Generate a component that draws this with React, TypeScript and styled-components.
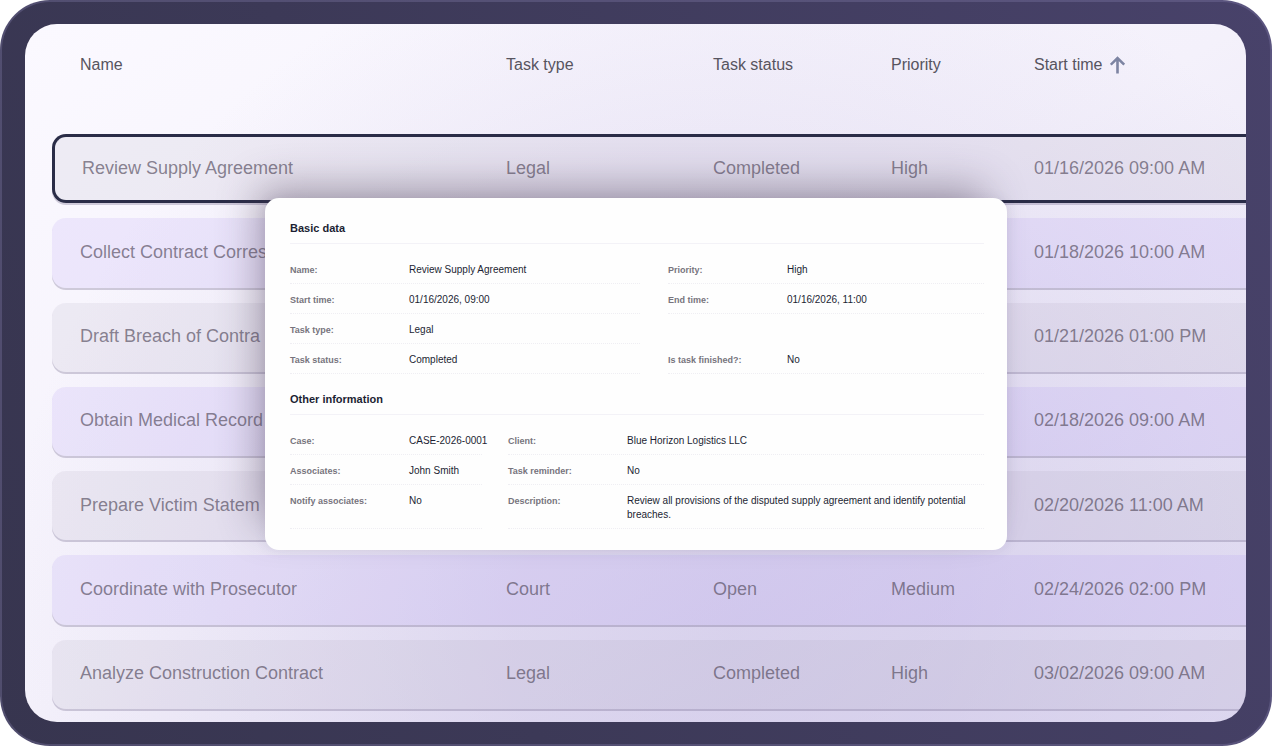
import React from "react";
import styled, { createGlobalStyle, css } from "styled-components";

const GlobalStyle = createGlobalStyle`
  *, *::before, *::after { box-sizing: border-box; }
  body {
    margin: 0;
    background: #ffffff;
    font-family: "Liberation Sans", Arial, Helvetica, sans-serif;
  }
`;

const Frame = styled.main`
  position: relative;
  display: flex;
  min-height: 100vh;
  padding: 22px 24px 22px 23px;
  border: 2px solid rgba(135, 128, 175, 0.32);
  border-radius: 50px;
  background: linear-gradient(70deg, #37354f 0%, #3c3957 35%, #48426a 100%) border-box;
`;

const Panel = styled.section`
  flex: 1;
  min-width: 0;
  display: flex;
  padding: 0 0 11px 27px;
  overflow: hidden;
  border-radius: 32px;
  background:
    radial-gradient(ellipse 60% 105% at 58% 88%, rgba(190, 180, 222, 0.42) 0%, rgba(190, 180, 222, 0.36) 30%, rgba(190, 180, 222, 0) 100%),
    linear-gradient(to bottom right, #fbf9ff 0%, #f4f1fb 50%, #e1dcf2 100%);
`;

const TaskTable = styled.table`
  flex: 1;
  min-width: 0;
  display: flex;
  flex-direction: column;
`;

const TableHead = styled.thead`
  display: block;
  margin-bottom: 29px;
`;

const TableBody = styled.tbody`
  flex: 1;
  display: grid;
  grid-auto-rows: 1fr;
  gap: 15px;
  padding-bottom: 2px;
`;

const columns = css`
  display: grid;
  grid-template-columns: 426fr 207fr 178fr 143fr 212fr;
  align-items: center;
  padding-left: 28px;
`;

const HeadRow = styled.tr`
  ${columns}
  height: 81px;
`;

const HeadCell = styled.th`
  padding: 0;
  font-size: 16px;
  line-height: 20px;
  font-weight: 400;
  text-align: left;
  white-space: nowrap;
  color: #57545f;
`;

const SortButton = styled.button`
  display: flex;
  align-items: center;
  gap: 8px;
  padding: 0;
  border: 0;
  background: none;
  font: inherit;
  color: inherit;
  cursor: pointer;
`;

const Cell = styled.td`
  padding: 0;
  font-size: 18px;
  line-height: 24px;
  white-space: nowrap;
  color: rgba(84, 76, 94, 0.68);
`;

const TaskRow = styled.tr<{ $tinted: boolean; $selected: boolean }>`
  ${columns}
  min-height: 56px;
  padding-bottom: 2px;
  border-radius: 14px 0 0 14px;
  background: ${(p) => (p.$tinted ? "rgba(170, 140, 240, 0.15)" : "rgba(160, 150, 170, 0.12)")};
  box-shadow: 0 2px 0 rgba(110, 100, 135, 0.3);
  ${(p) =>
    p.$selected &&
    css`
      padding-left: 25px;
      border: solid #2a2c47;
      border-width: 3px 0 3px 3px;
      ${Cell}:first-child {
        padding-left: 2px;
      }
    `}
`;

const Overlay = styled.div`
  position: absolute;
  inset: 0;
  display: flex;
  align-items: center;
  justify-content: center;
  padding-top: 2px;
`;

const Card = styled.article`
  width: 742px;
  max-width: 90%;
  padding: 22px 23px 21px 25px;
  border-radius: 14px;
  background: #fefefe;
  box-shadow:
    -14px -18px 40px -8px rgba(70, 56, 76, 0.42),
    0 0 12px rgba(90, 80, 130, 0.1);
`;

const CardSection = styled.section`
  & + & {
    margin-top: 17px;
  }
`;

const SectionTitle = styled.h2`
  margin: 0 0 10px;
  padding-bottom: 7px;
  border-bottom: 1px solid #f3f2f7;
  font-size: 11px;
  line-height: 16px;
  font-weight: 700;
  color: #1c1f33;
`;

const Fields = styled.dl<{ $split: string; $gap: number }>`
  display: grid;
  grid-template-columns: ${(p) => p.$split};
  column-gap: ${(p) => p.$gap}px;
  margin: 0;
`;

const Field = styled.div<{ $newRow?: boolean }>`
  display: grid;
  grid-template-columns: 119px minmax(0, 1fr);
  ${(p) => p.$newRow && "grid-column-start: 1;"}
  padding: 9px 0 6px;
  border-bottom: 1px dotted #efeef3;
  font-size: 10px;
  line-height: 14px;
`;

const Term = styled.dt`
  font-size: 9px;
  font-weight: 700;
  color: #77747d;
`;

const Value = styled.dd<{ $wrap?: boolean }>`
  margin: 0;
  white-space: ${(p) => (p.$wrap ? "normal" : "nowrap")};
  color: #1c1f33;
`;

const tasks = [
  ["Review Supply Agreement", "Legal", "Completed", "High", "01/16/2026 09:00 AM"],
  ["Collect Contract Corres", "", "", "", "01/18/2026 10:00 AM"],
  ["Draft Breach of Contra", "", "", "", "01/21/2026 01:00 PM"],
  ["Obtain Medical Record", "", "", "", "02/18/2026 09:00 AM"],
  ["Prepare Victim Statem", "", "", "", "02/20/2026 11:00 AM"],
  ["Coordinate with Prosecutor", "Court", "Open", "Medium", "02/24/2026 02:00 PM"],
  ["Analyze Construction Contract", "Legal", "Completed", "High", "03/02/2026 09:00 AM"],
];

const basicData: [string, string][] = [
  ["Name:", "Review Supply Agreement"],
  ["Priority:", "High"],
  ["Start time:", "01/16/2026, 09:00"],
  ["End time:", "01/16/2026, 11:00"],
  ["Task type:", "Legal"],
  ["Task status:", "Completed"],
  ["Is task finished?:", "No"],
];

const otherInformation: [string, string][] = [
  ["Case:", "CASE-2026-0001"],
  ["Client:", "Blue Horizon Logistics LLC"],
  ["Associates:", "John Smith"],
  ["Task reminder:", "No"],
  ["Notify associates:", "No"],
  [
    "Description:",
    "Review all provisions of the disputed supply agreement and identify potential breaches.",
  ],
];

const ArrowUp = () => (
  <svg width="16" height="18" viewBox="0 0 16 18" fill="none" stroke="#7d84a2" strokeWidth="2.6" aria-hidden="true">
    <path d="M7.5 17.5V2.2M.8 8.7l6.7-6.7 6.7 6.7" />
  </svg>
);

export default function App() {
  return (
    <>
      <GlobalStyle />
      <Frame>
        <Panel>
          <TaskTable>
            <TableHead>
              <HeadRow>
                <HeadCell>Name</HeadCell>
                <HeadCell>Task type</HeadCell>
                <HeadCell>Task status</HeadCell>
                <HeadCell>Priority</HeadCell>
                <HeadCell aria-sort="ascending">
                  <SortButton type="button">
                    Start time
                    <ArrowUp />
                  </SortButton>
                </HeadCell>
              </HeadRow>
            </TableHead>
            <TableBody>
              {tasks.map((task, index) => (
                <TaskRow key={task[0]} $tinted={index % 2 === 1} $selected={index === 0}>
                  {task.map((text, column) => (
                    <Cell key={column}>{text}</Cell>
                  ))}
                </TaskRow>
              ))}
            </TableBody>
          </TaskTable>
        </Panel>
        <Overlay>
          <Card>
            <CardSection>
              <SectionTitle>Basic data</SectionTitle>
              <Fields $split="350fr 316fr" $gap={28}>
                {basicData.map(([term, value]) => (
                  <Field key={term} $newRow={term === "Task status:"}>
                    <Term>{term}</Term>
                    <Value>{value}</Value>
                  </Field>
                ))}
              </Fields>
            </CardSection>
            <CardSection>
              <SectionTitle>Other information</SectionTitle>
              <Fields $split="192fr 476fr" $gap={26}>
                {otherInformation.map(([term, value]) => (
                  <Field key={term}>
                    <Term>{term}</Term>
                    <Value $wrap={term === "Description:"}>{value}</Value>
                  </Field>
                ))}
              </Fields>
            </CardSection>
          </Card>
        </Overlay>
      </Frame>
    </>
  );
}
